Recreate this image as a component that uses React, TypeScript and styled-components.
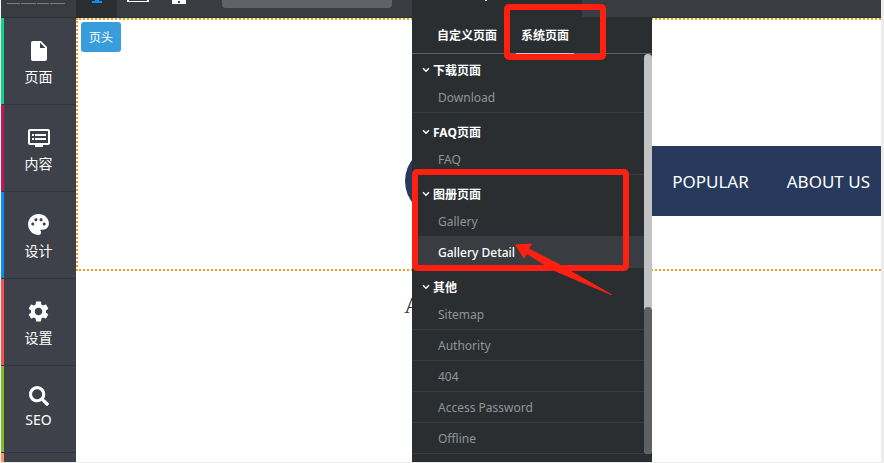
import React from "react";
import styled, { createGlobalStyle, css } from "styled-components";
import { MdInsertDriveFile, MdDvr, MdPalette, MdSettings } from "react-icons/md";
import { FaSearch } from "react-icons/fa";

const GlobalStyle = createGlobalStyle`
  * { box-sizing: border-box; }
  body {
    margin: 0;
    background: #f2f2f2;
    font-family: "Noto Sans", "Noto Sans CJK SC", sans-serif;
    font-size: 12px;
  }
  button, input { font-family: inherit; }
`;

const Frame = styled.div`
  height: 100vh;
  padding: 0 3px 1px 0;
  background: #ececec;
`;

const Shell = styled.div`
  display: flex;
  flex-direction: column;
  height: 100%;
  border-left: 1px solid #f4f4f4;
  background: #fff;
`;

const TopBar = styled.header`
  display: flex;
  align-items: flex-start;
  height: 18px;
  flex: none;
  background: #393d41;
  border-bottom: 1px solid #2a2e31;
`;

const Brand = styled.div`
  width: 75px;
  padding-left: 6px;
  line-height: 0;
`;

const Device = styled.button<{ $active?: boolean }>`
  display: flex;
  justify-content: center;
  align-items: flex-start;
  width: 41px;
  height: 100%;
  padding: 0;
  border: 0;
  color: ${(p) => (p.$active ? "#0c8cf5" : "#fff")};
  background: ${(p) => (p.$active ? "#2a2e31" : "transparent")};
`;

const Search = styled.input`
  width: 170px;
  height: 8px;
  margin: 0 20px 0 23px;
  padding: 0;
  border: 0;
  border-radius: 0 0 4px 4px;
  background: #5f6366;
`;

const MenuAnchor = styled.div`
  position: relative;
  width: 170px;
  height: 18px;
  z-index: 2;
`;

const MenuTrigger = styled.button`
  display: flex;
  width: 100%;
  height: 100%;
  padding: 0 0 0 72px;
  border: 0;
  background: #2a2e31;
`;

const Menu = styled.div`
  position: absolute;
  top: 100%;
  left: 0;
  display: flex;
  flex-direction: column;
  width: 240px;
  height: calc(100vh - 19px);
  background: #2a2e31;
`;

const Tabs = styled.div`
  display: flex;
  height: 36px;
  padding-left: 20px;
  border-bottom: 1px solid #5f6366;
  flex: none;
`;

const Tab = styled.button<{ $active?: boolean }>`
  height: 36px;
  margin-right: 14px;
  padding: 0 5px;
  border: 0;
  border-bottom: 1px solid ${(p) => (p.$active ? "#c4c4c4" : "#5f6366")};
  color: #fff;
  background: none;
  font-size: 12px;
  font-weight: 700;
  line-height: 34px;
  white-space: nowrap;
`;

const Scroller = styled.div`
  display: flex;
  flex: none;
`;

const Groups = styled.div`
  flex: 1;
  padding-top: 4px;
`;

const Track = styled.div`
  display: flex;
  align-items: flex-end;
  width: 8px;
  border-radius: 4px;
  background: #c2c2c2;
`;

const Thumb = styled.div`
  width: 100%;
  height: 147px;
  border-radius: 4px;
  background: #606060;
`;

const Group = styled.section`
  & + & { padding-top: 7px; }
`;

const GroupTitle = styled.button`
  display: flex;
  align-items: center;
  gap: 3px;
  width: 100%;
  height: 24px;
  padding: 0 0 0 10px;
  border: 0;
  color: #fff;
  background: none;
  font-size: 12px;
  font-weight: 700;
`;

const PageLink = styled.a<{ $active?: boolean }>`
  display: block;
  height: 31px;
  padding-left: 26px;
  border-bottom: 1px solid #393d41;
  color: #929496;
  font-size: 12px;
  line-height: 32px;
  text-decoration: none;
  ${(p) => p.$active && css`
    color: #fff;
    background: #393d41;
    font-weight: 500;
  `}
`;

const Highlight = styled.div<{ $x: number; $y: number; $w: number; $h: number }>`
  position: absolute;
  left: ${(p) => p.$x}px;
  top: ${(p) => p.$y}px;
  width: ${(p) => p.$w}px;
  height: ${(p) => p.$h}px;
  border: 6px solid #ff2012;
  border-radius: 5px;
  pointer-events: none;
`;

const Arrow = styled.svg`
  position: absolute;
  left: 102px;
  top: 224px;
  pointer-events: none;
`;

const Workspace = styled.div`
  display: flex;
  flex: 1;
  min-height: 0;
`;

const Sidebar = styled.nav`
  width: 75px;
  flex: none;
  overflow: hidden;
  background: #3e414a;
`;

const SideItem = styled.button<{ $stripe: string; $raised?: boolean }>`
  display: flex;
  flex-direction: column;
  align-items: center;
  justify-content: center;
  gap: ${(p) => (p.$raised ? 1 : 3)}px;
  width: 100%;
  height: 87px;
  padding: ${(p) => (p.$raised ? "0 0 6px" : "2px 0 0")};
  border: 0;
  border-bottom: 1px solid #33363f;
  color: #fff;
  background: none;
  box-shadow: inset 3px 0 ${(p) => p.$stripe};
  font-size: 14px;
  line-height: 20px;
`;

const IconSlot = styled.span`
  display: flex;
  align-items: center;
  justify-content: center;
  height: 26px;
`;

const Canvas = styled.main`
  flex: 1;
  min-width: 0;
  overflow: hidden;
`;

const HeaderBlock = styled.section`
  height: 253px;
  padding: 2px 0 0 3px;
  border: 2px dotted #f99d1c;
  border-right: 0;
`;

const BlockTag = styled.button`
  display: block;
  height: 30px;
  padding: 0 8px;
  border: 0;
  border-radius: 3px;
  color: #fff;
  background: #3a9ddb;
  font-size: 12px;
`;

const SiteNav = styled.nav`
  display: flex;
  align-items: center;
  justify-content: flex-end;
  gap: 38px;
  height: 70px;
  margin: 94px 0 0 324px;
  padding-right: 11px;
  border-radius: 35px 0 0 35px;
  background: #27395d;
`;

const SiteLink = styled.a`
  color: #fff;
  font-size: 17px;
  text-decoration: none;
  white-space: nowrap;
`;

const Heading = styled.h2`
  margin: 20px 0 0 328px;
  color: #333;
  font: 400 24px/28px "Liberation Serif", serif;
`;

const groups = [
  { title: "下载页面", pages: ["Download"] },
  { title: "FAQ页面", pages: ["FAQ"] },
  { title: "图册页面", pages: ["Gallery", "Gallery Detail"] },
  { title: "其他", pages: ["Sitemap", "Authority", "404", "Access Password", "Offline"] },
];

const sections = [
  { label: "页面", stripe: "#0fd285", icon: <MdInsertDriveFile size={24} /> },
  { label: "内容", stripe: "#c2185b", icon: <MdDvr size={24} /> },
  { label: "设计", stripe: "#0c8cf5", icon: <MdPalette size={25} /> },
  { label: "设置", stripe: "#f4514f", icon: <MdSettings size={25} /> },
  { label: "SEO", stripe: "#86b82f", icon: <FaSearch size={20} />, raised: true },
  { label: "", stripe: "#ff9464", icon: null },
];

export default function App() {
  return (
    <>
      <GlobalStyle />
      <Frame>
        <Shell>
          <TopBar>
            <Brand>
              <svg width="58" height="1" aria-hidden="true">
                <path d="M0 .5H13M14 .5H29M30 .5H42M43 .5H58" stroke="#777b7e" />
              </svg>
            </Brand>
            <Device $active aria-label="Desktop">
              <svg width="10" height="3"><path d="M3 0h4v1h3v2H0V1h3z" fill="currentColor" /></svg>
            </Device>
            <Device aria-label="Tablet">
              <svg width="22" height="2"><path d="M0 0h2v1h18V0h2v2H0z" fill="currentColor" /></svg>
            </Device>
            <Device aria-label="Phone">
              <svg width="14" height="4"><path d="M0 0h14v4H0zM6 1v2h2V1z" fill="currentColor" fillRule="evenodd" /></svg>
            </Device>
            <Search aria-label="Address" />
            <MenuAnchor>
              <MenuTrigger aria-label="Pages" aria-expanded="true">
                <svg width="4" height="1"><path d="M1 0h2v1H1z" fill="#fff" /></svg>
              </MenuTrigger>
              <Menu>
                <Tabs>
                  <Tab>自定义页面</Tab>
                  <Tab $active>系统页面</Tab>
                </Tabs>
                <Scroller>
                  <Groups>
                    {groups.map((group) => (
                      <Group key={group.title}>
                        <GroupTitle>
                          <svg width="8" height="6" viewBox="0 0 8 6" aria-hidden="true">
                            <path d="M1 1.2 4 4.2 7 1.2" fill="none" stroke="#fff" strokeWidth="1.5" />
                          </svg>
                          {group.title}
                        </GroupTitle>
                        {group.pages.map((page) => (
                          <PageLink key={page} href="#" $active={page === "Gallery Detail"}>{page}</PageLink>
                        ))}
                      </Group>
                    ))}
                  </Groups>
                  <Track><Thumb /></Track>
                </Scroller>
                <Highlight $x={92} $y={-14} $w={102} $h={56} />
                <Highlight $x={0} $y={151} $w={217} $h={102} />
                <Arrow width="100" height="54" aria-hidden="true">
                  <path d="M1 2.5 18 1.5 15 6.5 45 22 98 52.5 97 53 38 28 13 12 10 17Z" fill="#ff2012" />
                </Arrow>
              </Menu>
            </MenuAnchor>
          </TopBar>
          <Workspace>
            <Sidebar>
              {sections.map((s) => (
                <SideItem key={s.stripe} $stripe={s.stripe} $raised={s.raised}>
                  <IconSlot>{s.icon}</IconSlot>
                  {s.label}
                </SideItem>
              ))}
            </Sidebar>
            <Canvas>
              <HeaderBlock>
                <BlockTag>页头</BlockTag>
                <SiteNav>
                  <SiteLink href="#">POPULAR</SiteLink>
                  <SiteLink href="#">ABOUT US</SiteLink>
                </SiteNav>
              </HeaderBlock>
              <Heading>A</Heading>
            </Canvas>
          </Workspace>
        </Shell>
      </Frame>
    </>
  );
}
